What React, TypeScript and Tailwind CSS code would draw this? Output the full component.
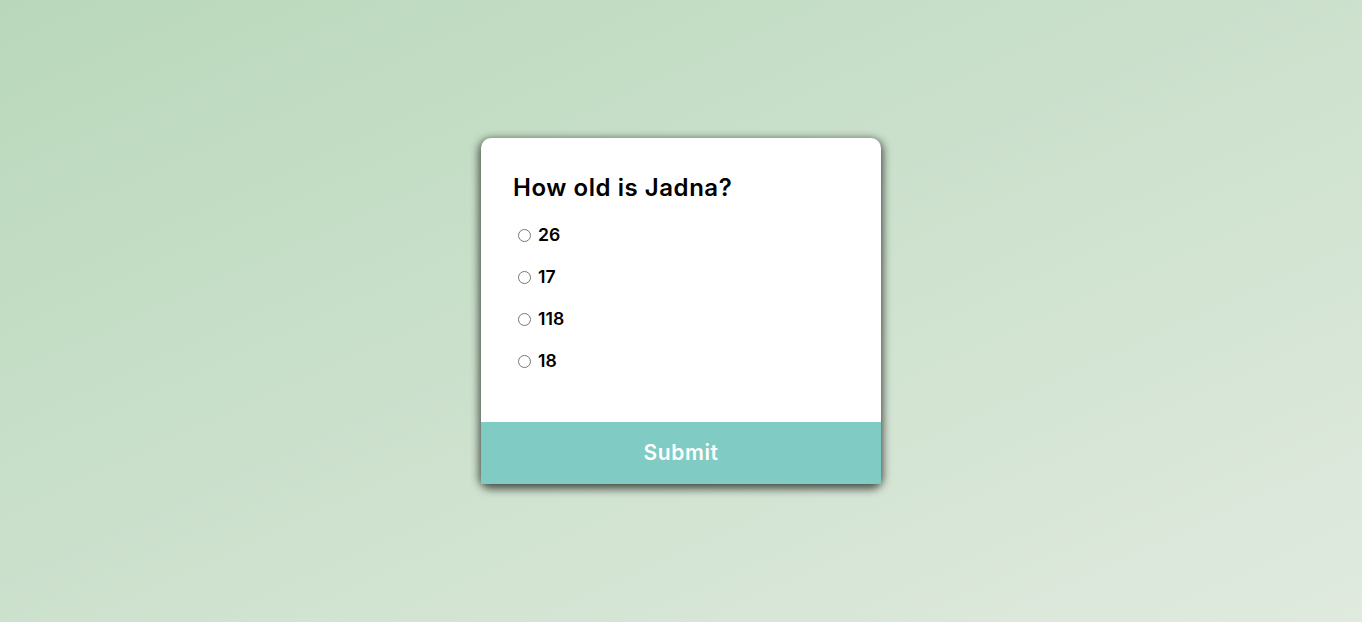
import React from "react";

export default function App() {
  const options = ["26", "17", "118", "18"];
  return (
    <div
      className="w-full h-[622px] flex items-center justify-center bg-[linear-gradient(to_bottom_right,#b9d8bb,#e0eadf)]"
      style={{ fontFamily: "Inter, 'Open Sans', sans-serif" }}
    >
      <div className="w-[400px] bg-white rounded-[10px] shadow-[0_3px_9px_2px_rgba(0,0,0,0.65)]">
        <div className="px-8 pt-8 pb-8">
          <h2 className="text-[24px] leading-[36px] font-semibold text-black tracking-[0.55px]">
            How old is Jadna?
          </h2>
          <ul className="list-none">
            {options.map((o, i) => (
              <li key={o} className="my-4 flex items-center h-[26px]">
                <input
                  type="radio"
                  name="answer"
                  id={`a${i}`}
                  className="ml-[5px] mr-[3px] w-[13px] h-[13px] accent-gray-500"
                />
                <label htmlFor={`a${i}`} className="ml-[4px] text-[17.6px] font-semibold text-black">
                  {o}
                </label>
              </li>
            ))}
          </ul>
        </div>
        <button className="w-full h-[62px] bg-[#80cbc4] text-white text-[21px] font-semibold tracking-[0.6px] flex items-center justify-center">
          Submit
        </button>
      </div>
    </div>
  );
}
